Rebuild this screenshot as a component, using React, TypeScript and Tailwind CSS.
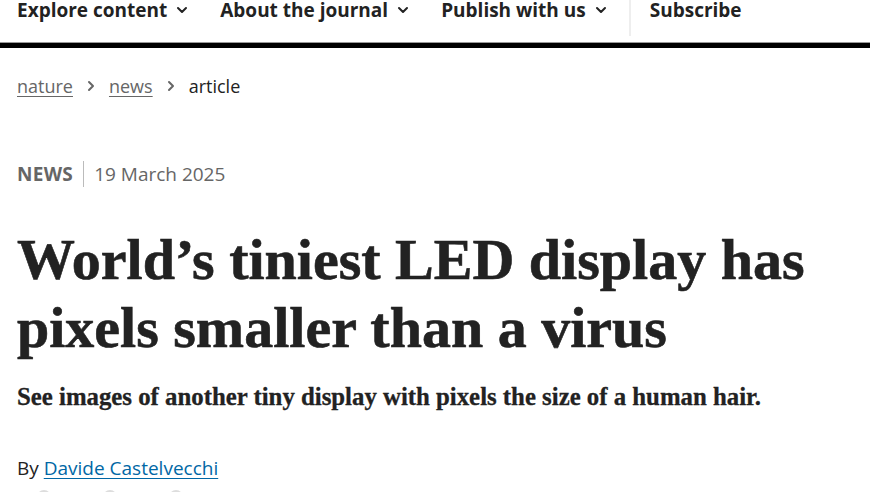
import { ChevronDown, ChevronRight } from 'lucide-react';

const navItems = ['Explore content', 'About the journal', 'Publish with us'];

export default function App() {
    return (
        <div className="w-[870px] h-[492px] overflow-hidden bg-white text-[#222]" style={{ fontFamily: '"Open Sans", "Liberation Sans", sans-serif' }}>
            {/* top nav, scrolled so only the bottom shows */}
            <div className="flex items-start h-[46px] pl-[17px] -mt-[4px]">
                {navItems.map((item) => (
                    <div key={item} className="flex items-center gap-[7px] mr-[30px] text-[19px] font-bold leading-[28px] text-[#222]">
                        {item}
                        <ChevronDown size={16} strokeWidth={3} />
                    </div>
                ))}
                <div className="w-[2px] h-[40px] bg-[#eee] -ml-[10px] mr-[19px]" />
                <div className="text-[19px] font-bold leading-[28px]">Subscribe</div>
            </div>
            <div className="h-[1px] bg-[#999]" />
            <div className="h-[5px] bg-black" />

            <div className="px-[17px]">
                <nav className="flex items-center gap-[10px] mt-[24px] text-[18px] leading-[28px]">
                    <span className="underline underline-offset-[3px] text-[#666]">nature</span>
                    <ChevronRight size={16} strokeWidth={3} className="text-[#666]" />
                    <span className="underline underline-offset-[3px] text-[#666]">news</span>
                    <ChevronRight size={16} strokeWidth={3} className="text-[#666]" />
                    <span className="text-[#222]">article</span>
                </nav>

                <div className="flex items-center mt-[60px] text-[19px] leading-[28px] text-[#666]">
                    <span className="font-bold tracking-[0.3px]">NEWS</span>
                    <span className="w-px h-[26px] bg-[#bbb] mx-[10px]" />
                    <span>19 March 2025</span>
                </div>

                <h1 className="mt-[38px] text-[58px] leading-[68px] font-bold text-[#222] [-webkit-text-stroke:0.6px_#222]" style={{ fontFamily: '"Liberation Serif", serif' }}>
                    World’s tiniest LED display has pixels smaller than a virus
                </h1>

                <p className="mt-[20px] text-[24.8px] leading-[30px] font-bold text-[#222] [-webkit-text-stroke:0.3px_#222]" style={{ fontFamily: '"Liberation Serif", serif' }}>
                    See images of another tiny display with pixels the size of a human hair.
                </p>

                <p className="mt-[42px] text-[19px] leading-[28px] text-[#222]">
                    By <span className="underline underline-offset-[3px] text-[#0067a5]">Davide Castelvecchi</span>
                </p>

                <div className="flex gap-[52px] pl-[20px] mt-[8px]">
                    <span className="w-[14px] h-[14px] rounded-full bg-[#ddd]" />
                    <span className="w-[14px] h-[14px] rounded-full bg-[#ddd]" />
                    <span className="w-[14px] h-[14px] rounded-full bg-[#ddd]" />
                </div>
            </div>
        </div>
    );
}
